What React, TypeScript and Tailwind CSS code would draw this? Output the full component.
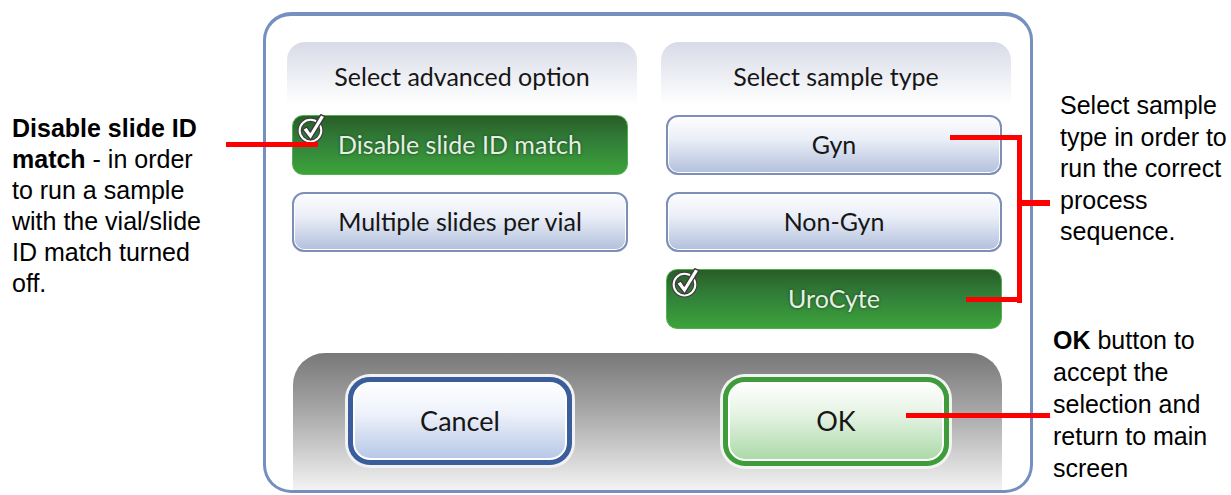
import React from "react";

const ui = { fontFamily: "Lato, 'Open Sans', sans-serif" } as React.CSSProperties;
const arial = { fontFamily: "'Liberation Sans', Arial, sans-serif" } as React.CSSProperties;

const Check = () => (
  <svg width="31" height="32" viewBox="0 0 30 31" className="absolute left-[3px] top-[-4px]">
    <circle cx="14" cy="18" r="10.5" fill="none" stroke="#3a3a3a" strokeWidth="4" />
    <circle cx="14" cy="18" r="10.5" fill="none" stroke="#ffffff" strokeWidth="2" />
    <path
      d="M6.5 17 L10.5 14.5 L13.8 19.5 L24 2.5 L28 4.5 L14.2 27 Z"
      fill="#ffffff"
      stroke="#3a3a3a"
      strokeWidth="1.3"
      strokeLinejoin="round"
    />
  </svg>
);

const BlueBtn = ({ label }: { label: string }) => (
  <div
    className="h-[60px] ml-[5px] w-[336px] rounded-[12px] border-2 border-[#7d8fb6] bg-[linear-gradient(to_bottom,#fdfdff_0%,#eaeef7_40%,#b2c0dc_100%)] shadow-[inset_0_0_0_1px_#ffffff] flex items-center justify-center text-[25px] text-[#161616]"
    style={ui}
  >
    {label}
  </div>
);

const GreenBtn = ({ label }: { label: string }) => (
  <div
    className="relative h-[60px] ml-[5px] w-[336px] rounded-[11px] border border-[#52b050] bg-[linear-gradient(to_bottom,#295d26_0%,#32803a_45%,#3ca33a_100%)] flex items-center justify-center text-[25px] text-[#e4f1e2] [text-shadow:0_0_3px_#1c3a1a]"
    style={ui}
  >
    <Check />
    {label}
  </div>
);

const Header = ({ label }: { label: string }) => (
  <div
    className="h-[73px] pb-[4px] rounded-t-[18px] bg-[linear-gradient(to_bottom,#d8dbe7_0%,#eef0f5_50%,#ffffff_85%)] flex items-center justify-center text-[25px] text-[#161616]"
    style={ui}
  >
    {label}
  </div>
);

export default function App() {
  return (
    <div className="relative flex w-[1231px] h-[495px] bg-white overflow-hidden">
      {/* left annotation */}
      <div className="w-[263px] shrink-0 pl-[12px] pt-[113px] text-[25px] leading-[31px] text-black whitespace-nowrap" style={arial}>
        <b>Disable slide ID</b>
        <br />
        <b>match</b> - in order
        <br />
        to run a sample
        <br />
        with the vial/slide
        <br />
        ID match turned
        <br />
        off.
      </div>

      {/* dialog */}
      <div className="mt-[12px] h-[481px] w-[770px] shrink-0 rounded-[28px] border-[3px] border-t-4 border-[#7590c0] bg-white flex flex-col pt-[26px] pl-[21px] pr-[19px]">
        <div className="grid grid-cols-[350px_350px] gap-x-[24px] items-start">
          <div className="flex flex-col">
            <Header label="Select advanced option" />
            <div className="flex flex-col gap-[17px]">
              <GreenBtn label="Disable slide ID match" />
              <BlueBtn label="Multiple slides per vial" />
            </div>
          </div>
          <div className="flex flex-col">
            <Header label="Select sample type" />
            <div className="flex flex-col gap-[17px]">
              <BlueBtn label="Gyn" />
              <BlueBtn label="Non-Gyn" />
              <GreenBtn label="UroCyte" />
            </div>
          </div>
        </div>

        <div className="mt-[24px] ml-[6px] w-[709px] flex-1 rounded-t-[32px] bg-[linear-gradient(to_bottom,#787878_0%,#a4a4a4_40%,#f3f3f3_100%)] flex justify-between pl-[55px] pr-[53px] pt-[24px]">
          <div
            className="h-[88px] w-[224px] rounded-[22px] border-[5px] border-[#3a5e9c] shadow-[0_0_0_3px_#f2f2f5,inset_0_0_0_2px_#ffffff] bg-[linear-gradient(to_bottom,#ffffff_0%,#eef2fa_40%,#b5c6e6_100%)] flex items-center justify-center text-[27px] text-[#161616]"
            style={ui}
          >
            Cancel
          </div>
          <div
            className="h-[89px] w-[226px] rounded-[22px] border-[5px] border-[#3f9c3b] shadow-[0_0_0_3px_#f2f4f2,inset_0_0_0_2px_#ffffff] bg-[linear-gradient(to_bottom,#ffffff_0%,#e6f3e4_40%,#a9d9a6_100%)] flex items-center justify-center text-[27px] text-[#161616]"
            style={ui}
          >
            OK
          </div>
        </div>
      </div>

      {/* right annotations */}
      <div className="flex-1 flex flex-col text-[25px] text-black whitespace-nowrap" style={arial}>
        <div className="pl-[27px] pt-[90px] leading-[31.5px]">
          Select sample
          <br />
          type in order to
          <br />
          run the correct
          <br />
          process
          <br />
          sequence.
        </div>
        <div className="pl-[20px] mt-[76px] leading-[32px]">
          <b>OK</b> button to
          <br />
          accept the
          <br />
          selection and
          <br />
          return to main
          <br />
          screen
        </div>
      </div>

      {/* red callout lines */}
      <div className="absolute left-[226px] top-[142px] w-[92px] h-[5px] bg-[#ff0000]" />
      <div className="absolute left-[950px] top-[135px] w-[72px] h-[5px] bg-[#ff0000]" />
      <div className="absolute left-[1017px] top-[135px] w-[5px] h-[168px] bg-[#ff0000]" />
      <div className="absolute left-[966px] top-[297px] w-[56px] h-[5px] bg-[#ff0000]" />
      <div className="absolute left-[1017px] top-[200px] w-[33px] h-[6px] bg-[#ff0000]" />
      <div className="absolute left-[906px] top-[413px] w-[144px] h-[5px] bg-[#ff0000]" />
    </div>
  );
}
